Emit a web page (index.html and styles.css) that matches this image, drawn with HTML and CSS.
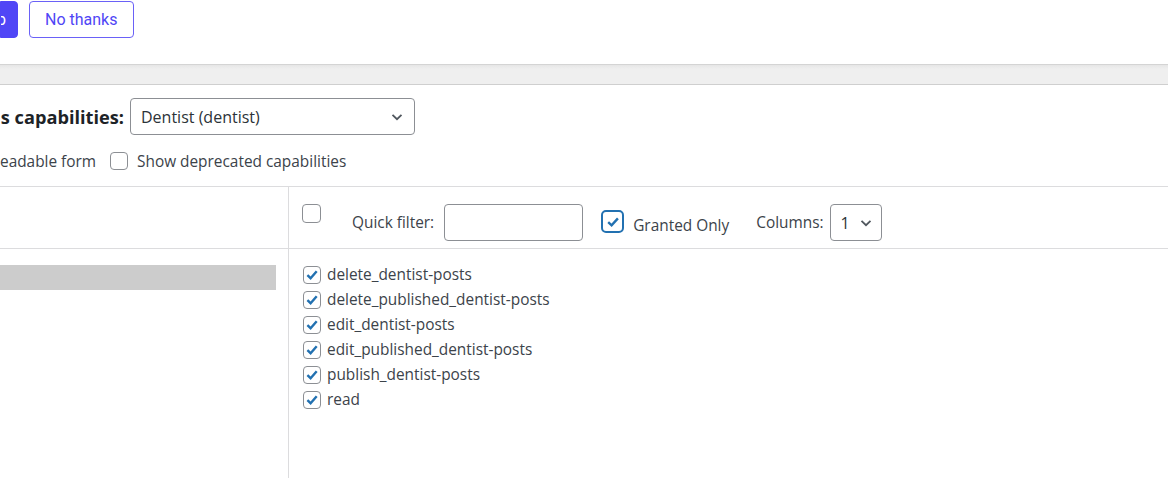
FILE: index.html
```html
<!DOCTYPE html>
<html lang="en">
<head>
  <meta charset="UTF-8" />
  <title>User Role Editor</title>
  <link rel="stylesheet" href="styles.css">
</head>
<body>
  <div class="notice">
    <div class="notice-buttons">
      <a class="btn btn-primary" href="#">p</a>
      <a class="btn btn-outline" href="#">No thanks</a>
    </div>
  </div>
  <div class="band"></div>

  <div class="role-row">
    <h2 class="clip">s capabilities:</h2>
    <div class="select role-select">
      <span>Dentist (dentist)</span>
      <svg width="14" height="14" viewBox="0 0 14 14"><path d="M2.5 4.8 7 9.2l4.5-4.4" fill="none" stroke="#50575e" stroke-width="1.8"/></svg>
    </div>
  </div>

  <div class="opts-row">
    <span class="clip short">eadable form</span>
    <label class="opt"><span class="cb"></span>Show deprecated capabilities</label>
  </div>

  <div class="caps">
    <div class="caps-side">
      <div class="side-head"></div>
      <div class="side-body">
        <div class="group-bar"></div>
      </div>
    </div>
    <div class="caps-main">
      <div class="toolbar">
        <span class="cb all"></span>
        <label class="filter">Quick filter: <span class="text-input"></span></label>
        <label class="granted">
          <span class="cb big checked">
            <svg width="16" height="16" viewBox="0 0 16 16"><path d="M3.2 8.2 6.6 11.4 12.9 4.4" fill="none" stroke="#2271b1" stroke-width="2.4"/></svg>
          </span>
          <span class="granted-text">Granted Only</span>
        </label>
        <label class="columns">Columns:
          <span class="select col-select">
            <span>1</span>
            <svg width="14" height="14" viewBox="0 0 14 14"><path d="M2.5 4.8 7 9.2l4.5-4.4" fill="none" stroke="#50575e" stroke-width="1.8"/></svg>
          </span>
        </label>
      </div>
      <ul class="cap-list" id="capList"></ul>
    </div>
  </div>

  <script>
    const caps = [
      'delete_dentist-posts',
      'delete_published_dentist-posts',
      'edit_dentist-posts',
      'edit_published_dentist-posts',
      'publish_dentist-posts',
      'read'
    ];
    const list = document.getElementById('capList');
    caps.forEach(cap => {
      const li = document.createElement('li');
      li.innerHTML = `
        <span class="cb checked">
          <svg width="16" height="16" viewBox="0 0 16 16"><path d="M3.4 8.2 6.6 11.2 12.7 4.3" fill="none" stroke="#2271b1" stroke-width="2.4"/></svg>
        </span>
        <span class="cap-name">${cap}</span>`;
      list.appendChild(li);
    });
  </script>
</body>
</html>
```

FILE: styles.css
```css
body {
  margin: 0;
  font-family: 'Open Sans', 'Noto Sans', sans-serif;
  font-size: 15.4px;
  color: #3c434a;
  background: #fff;
  overflow: hidden;
}
.notice {
  height: 64px;
}
.notice-buttons {
  display: flex;
  gap: 11px;
  padding-top: 1px;
}
.btn {
  display: inline-flex;
  align-items: center;
  height: 37px;
  box-sizing: border-box;
  padding: 0 16px;
  border-radius: 4px;
  font-family: Roboto, sans-serif;
  font-size: 16px;
  text-decoration: none;
}
.btn-primary {
  background: #5046f6;
  color: #fff;
  border: 1px solid #5046f6;
  width: 18px;
  padding: 0;
  justify-content: flex-end;
  padding-right: 11px;
  border-radius: 0 4px 4px 0;
  overflow: hidden;
}
.btn-outline {
  background: #fff;
  color: #5046f6;
  border: 1px solid #6a61f7;
  padding: 0 16px 0 15px;
}
.band {
  height: 19px;
  background: linear-gradient(#e6e6e6, #efefef 4px);
  border-top: 1px solid #d4d4d4;
  border-bottom: 1px solid #cfcfcf;
}

.clip {
  display: block;
  white-space: nowrap;
  text-align: right;
  width: 124px;
  flex-shrink: 0;
}
.role-row {
  display: flex;
  align-items: center;
  gap: 6px;
  margin-top: 13px;
}
.role-row h2 {
  margin: 0;
  font-size: 18.2px;
  font-weight: 700;
  color: #1d2327;
}
.select {
  display: flex;
  align-items: center;
  justify-content: space-between;
  box-sizing: border-box;
  border: 1px solid #8c8f94;
  border-radius: 4px;
  background: #fff;
  color: #2c3338;
}
.role-select {
  width: 285px;
  height: 37px;
  padding: 0 10px;
  font-size: 16px;
}
.opts-row {
  display: flex;
  align-items: center;
  margin-top: 14px;
  height: 24px;
}
.clip.short {
  width: 95px;
}
.opt {
  display: flex;
  align-items: center;
  gap: 9px;
  margin-left: 15px;
}
.cb {
  display: inline-flex;
  align-items: center;
  justify-content: center;
  width: 18px;
  height: 18px;
  box-sizing: border-box;
  border: 1px solid #8c8f94;
  border-radius: 4px;
  background: #fff;
  flex-shrink: 0;
}
.cb.big {
  width: 23px;
  height: 23px;
  border: 2px solid #2271b1;
  border-radius: 5px;
}

.caps {
  display: flex;
  margin-top: 13px;
  border-top: 1px solid #dcdcde;
  height: 300px;
}
.caps-side {
  width: 288px;
  border-right: 1px solid #dcdcde;
  flex-shrink: 0;
}
.side-head {
  height: 61px;
  border-bottom: 1px solid #dcdcde;
}
.side-body {
  padding-top: 16px;
}
.group-bar {
  width: 276px;
  height: 25px;
  background: #cccccc;
}
.caps-main {
  flex: 1;
}
.toolbar {
  display: flex;
  align-items: flex-start;
  height: 61px;
  border-bottom: 1px solid #dcdcde;
  padding-left: 13px;
}
.toolbar .all {
  margin-top: 17px;
  width: 19px;
  height: 19px;
}
.filter {
  display: flex;
  align-items: center;
  gap: 10px;
  margin-left: 31px;
  margin-top: 17px;
}
.text-input {
  display: block;
  width: 139px;
  height: 37px;
  box-sizing: border-box;
  border: 1px solid #8c8f94;
  border-radius: 4px;
}
.granted {
  display: flex;
  align-items: flex-start;
  gap: 9px;
  margin-left: 18px;
  margin-top: 23px;
}
.granted-text {
  margin-top: 5px;
}
.columns {
  display: flex;
  align-items: center;
  gap: 6px;
  margin-left: 27px;
  margin-top: 17px;
}
.col-select {
  width: 52px;
  height: 37px;
  padding: 0 8px 0 10px;
  font-size: 16px;
}
.cap-list {
  list-style: none;
  margin: 0;
  padding: 13px 0 0 14px;
}
.cap-list li {
  display: flex;
  align-items: center;
  gap: 6px;
  height: 25px;
}
```
